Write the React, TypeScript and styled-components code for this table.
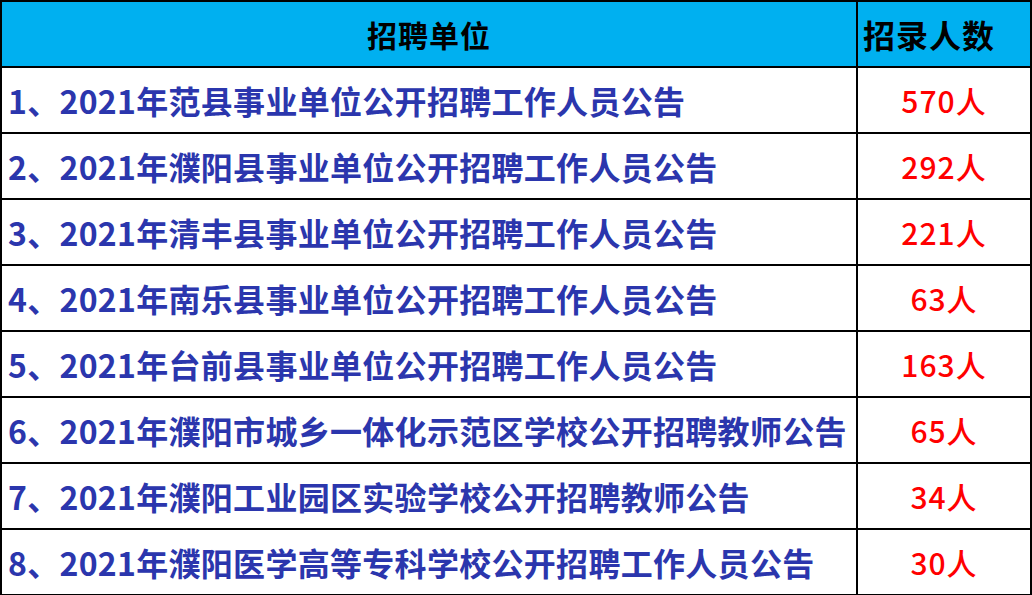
import { Fragment } from 'react'
import styled, { createGlobalStyle } from 'styled-components'

const GlobalStyle = createGlobalStyle`
  html, body {
    margin: 0;
    padding: 0;
    background: #ffffff;
    overflow: hidden;
  }
`

const Table = styled.div`
  display: grid;
  grid-template-columns: 854px 172px;
  grid-auto-rows: 64px;
  gap: 2px;
  padding: 2px;
  width: 1032px;
  box-sizing: border-box;
  background: #000000;
  font-family: "Noto Sans CJK SC", "Liberation Sans", sans-serif;
`

interface CellProps {
  head?: boolean
  center?: boolean
  indent?: number
}

const Cell = styled.div<CellProps>`
  display: flex;
  align-items: center;
  justify-content: ${({ center }) => (center ? 'center' : 'flex-start')};
  padding-left: ${({ indent }) => indent ?? 0}px;
  background: ${({ head }) => (head ? '#00b0f0' : '#ffffff')};
  white-space: nowrap;
  overflow: hidden;
`

interface HeadProps {
  large?: boolean
}

const HeadText = styled.span<HeadProps>`
  font-size: ${({ large }) => (large ? '32px' : '30px')};
  font-weight: 700;
  color: #000000;
  letter-spacing: 1px;
`

const NameText = styled.span`
  font-size: 32px;
  font-weight: 700;
  color: #2b36ad;
  letter-spacing: 0.3px;
`

const CountText = styled.span`
  font-size: 30px;
  font-weight: 500;
  color: #ff0000;
  letter-spacing: 1px;
`

const rows = [
  { name: '1、2021年范县事业单位公开招聘工作人员公告', count: '570人' },
  { name: '2、2021年濮阳县事业单位公开招聘工作人员公告', count: '292人' },
  { name: '3、2021年清丰县事业单位公开招聘工作人员公告', count: '221人' },
  { name: '4、2021年南乐县事业单位公开招聘工作人员公告', count: '63人' },
  { name: '5、2021年台前县事业单位公开招聘工作人员公告', count: '163人' },
  { name: '6、2021年濮阳市城乡一体化示范区学校公开招聘教师公告', count: '65人' },
  { name: '7、2021年濮阳工业园区实验学校公开招聘教师公告', count: '34人' },
  { name: '8、2021年濮阳医学高等专科学校公开招聘工作人员公告', count: '30人' },
]

function App() {
  return (
    <>
      <GlobalStyle />
      <Table>
        <Cell head center>
          <HeadText>招聘单位</HeadText>
        </Cell>
        <Cell head indent={5}>
          <HeadText large>招录人数</HeadText>
        </Cell>
        {rows.map((row) => (
          <Fragment key={row.name}>
            <Cell indent={6}>
              <NameText>{row.name}</NameText>
            </Cell>
            <Cell center>
              <CountText>{row.count}</CountText>
            </Cell>
          </Fragment>
        ))}
      </Table>
    </>
  )
}

export default App
